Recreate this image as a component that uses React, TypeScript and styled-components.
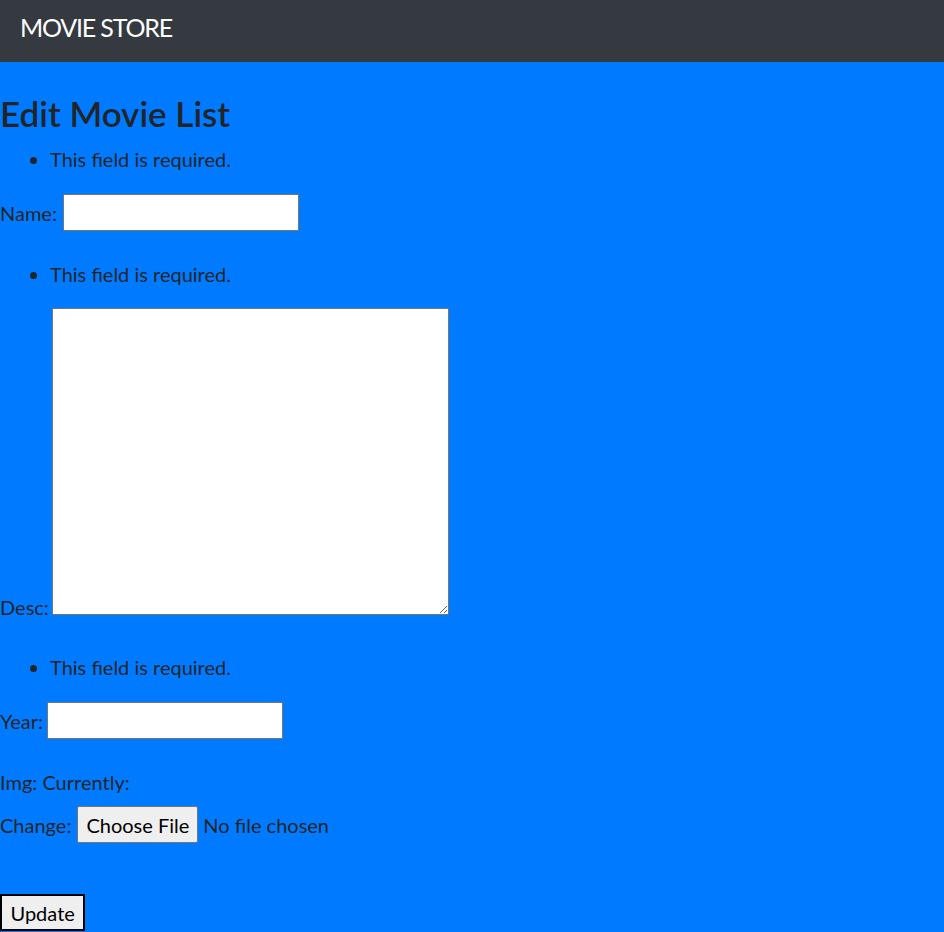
import React from "react";
import styled, { createGlobalStyle } from "styled-components";

const GlobalStyle = createGlobalStyle`
  *, *::before, *::after { box-sizing: border-box; }
  html, body { background: #007bff; }
  body {
    margin: 0;
    font-family: Lato, "Liberation Sans", sans-serif;
    font-size: 20px;
    line-height: 30px;
    color: #212529;
  }
`;

const Navbar = styled.nav`
  height: 62px;
  background: #343a40;
  padding: 15px 20px 0;
`;

const Brand = styled.a`
  display: block;
  color: #fff;
  font-size: 25px;
  line-height: 25px;
  letter-spacing: -1.2px;
  text-decoration: none;
`;

const Main = styled.main`
  padding-top: 30px;
`;

const Title = styled.h1`
  margin: 0 0 10px;
  font-size: 35px;
  font-weight: 600;
  line-height: 42px;
`;

const ErrorList = styled.ul<{ $after: number }>`
  margin: 0 0 ${(p) => p.$after}px;
  padding-left: 50px;
  line-height: 30px;
`;

const Row = styled.p<{ $after: number }>`
  margin: 0 0 ${(p) => p.$after}px;
  line-height: 30px;
`;

const Label = styled.label<{ $gap: number }>`
  margin-right: ${(p) => p.$gap}px;
`;

const TextInput = styled.input`
  height: 37px;
  width: 236px;
  padding: 1px 2px;
  border: 1px solid #767676;
  border-radius: 0;
  background: #fff;
  font: inherit;
  line-height: 30px;
  vertical-align: baseline;
`;

const TextArea = styled.textarea`
  width: 397px;
  height: 307px;
  padding: 1px 2px;
  border: 1px solid #767676;
  border-radius: 0;
  background: #fff;
  font: inherit;
  line-height: 30px;
  vertical-align: baseline;
`;

const FileInput = styled.input`
  font: inherit;
  line-height: 30px;
  color: #212529;
  &::file-selector-button {
    height: 37px;
    margin: 0 5px 0 0;
    padding: 0 8px;
    border: 1px solid #767676;
    border-radius: 2px;
    background: #efefef;
    color: #000;
    font: inherit;
    line-height: 30px;
  }
`;

const SubmitButton = styled.button`
  display: block;
  height: 37px;
  margin: 0;
  padding: 0 8px 0 8.5px;
  border: 2px solid #000;
  border-radius: 0;
  background: #efefef;
  color: #000;
  font: inherit;
  line-height: 30px;
`;

export default function App() {
  return (
    <>
      <GlobalStyle />
      <Navbar>
        <Brand href="#">MOVIE STORE</Brand>
      </Navbar>
      <Main>
        <Title>Edit Movie List</Title>
        <form onSubmit={(e) => e.preventDefault()}>
          <ErrorList $after={20}>
            <li>This field is required.</li>
          </ErrorList>
          <Row $after={28}>
            <Label htmlFor="id_name" $gap={6}>Name:</Label>
            <TextInput type="text" id="id_name" />
          </Row>
          <ErrorList $after={19}>
            <li>This field is required.</li>
          </ErrorList>
          <Row $after={30}>
            <Label htmlFor="id_desc" $gap={3}>Desc:</Label>
            <TextArea id="id_desc" />
          </Row>
          <ErrorList $after={20}>
            <li>This field is required.</li>
          </ErrorList>
          <Row $after={28}>
            <Label htmlFor="id_year" $gap={4}>Year:</Label>
            <TextInput type="text" id="id_year" />
          </Row>
          <Row $after={9}>Img: Currently:</Row>
          <Row $after={51}>
            <Label htmlFor="id_img" $gap={6}>Change:</Label>
            <FileInput type="file" id="id_img" />
          </Row>
          <SubmitButton type="submit">Update</SubmitButton>
        </form>
      </Main>
    </>
  );
}
